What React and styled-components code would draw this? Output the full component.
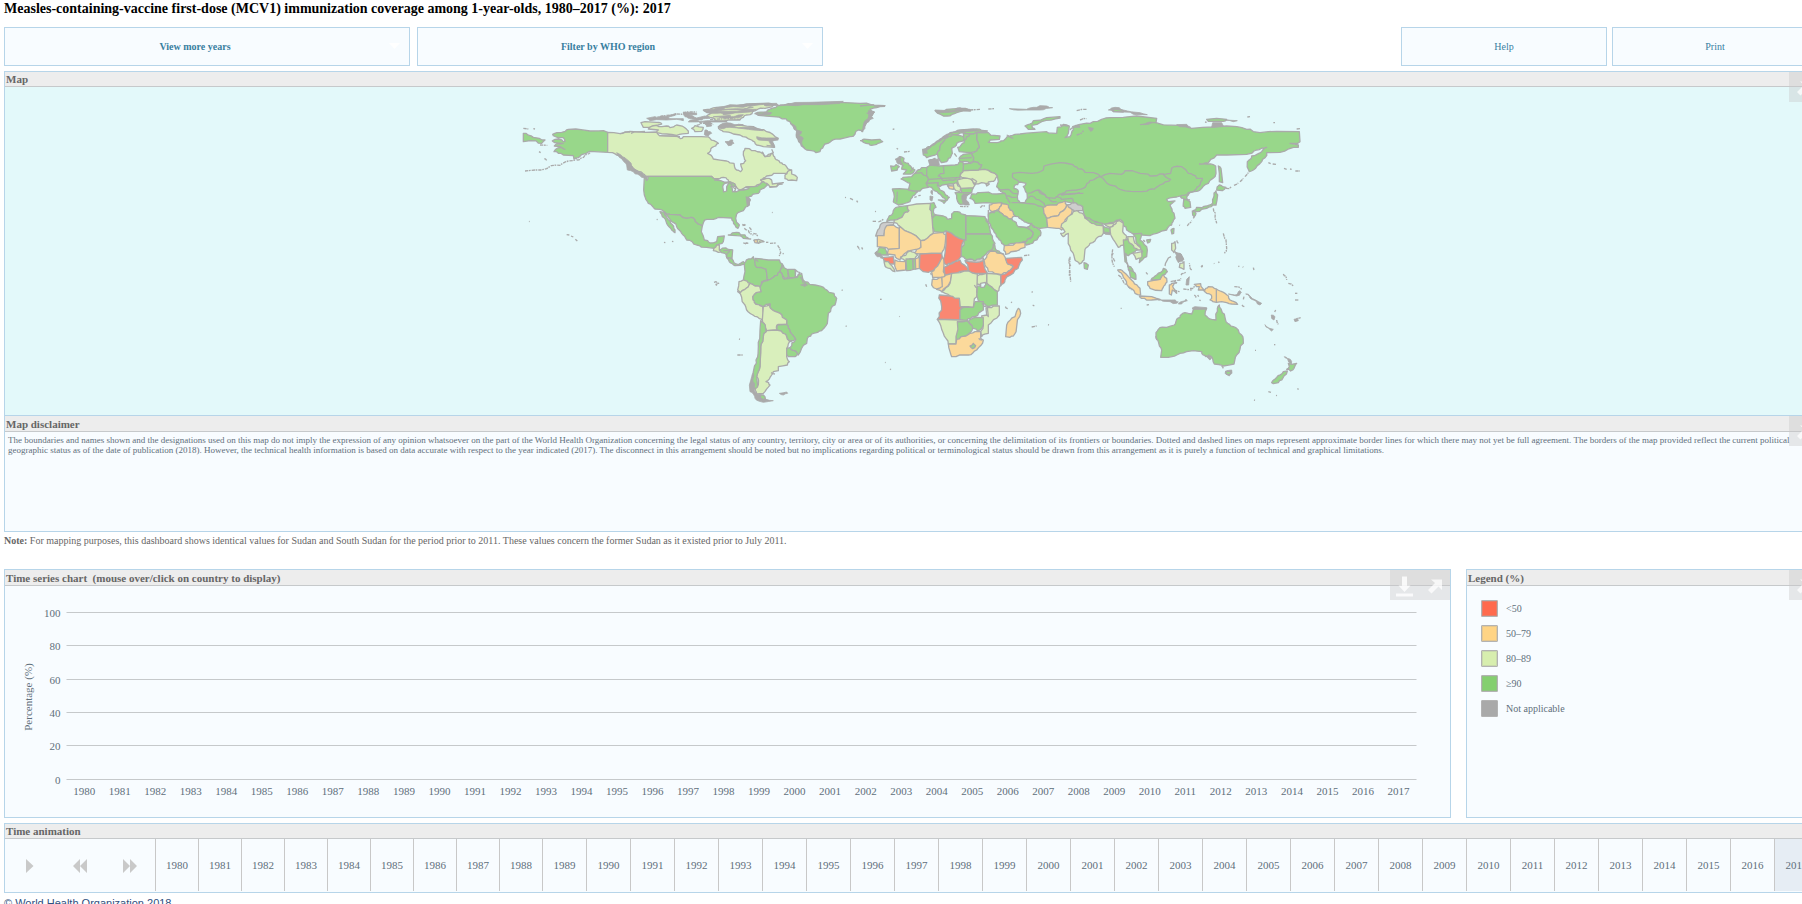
import React from "react";
import styled, { createGlobalStyle } from "styled-components";

const GlobalStyle = createGlobalStyle`
  html, body { margin: 0; padding: 0; background: #fff; }
  body { overflow: hidden; height: 904px; font-family: "Liberation Serif", "Times New Roman", serif; color: #5f6f7b; }
  * { box-sizing: border-box; }
`;

const Page = styled.main`
  width: 1818px;
  height: 904px;
  padding-left: 4px;
  overflow: hidden;
  display: flex;
  flex-direction: column;
  > * { flex-shrink: 0; }
`;

const Title = styled.h1`
  margin: 0;
  height: 27px;
  font-size: 14px;
  line-height: 17px;
  font-weight: bold;
  color: #000;
  white-space: nowrap;
`;

const Toolbar = styled.div`
  display: flex;
  height: 39px;
  margin-bottom: 5px;
`;

const Button = styled.button`
  position: relative;
  width: ${(p) => p.$width}px;
  height: 39px;
  margin: 0 ${(p) => p.$gap || 0}px 0 0;
  padding: 0 ${(p) => (p.$bold ? 24 : 0)}px 0 0;
  border: 1px solid #b7d5e9;
  background: #f8fcff;
  color: #38809f;
  font: ${(p) => (p.$bold ? "bold" : "normal")} 10px/37px "Liberation Serif", serif;
`;

const Caret = styled.svg`
  position: absolute;
  right: 9px;
  top: 15px;
`;

const Spacer = styled.div`
  flex: 1;
`;

const Panel = styled.section`
  position: relative;
  display: flex;
  flex-direction: column;
  width: ${(p) => (p.$width ? p.$width + "px" : "auto")};
  height: ${(p) => p.$height}px;
  border: 1px solid #b7d5e9;
  border-bottom-width: ${(p) => (p.$open ? 0 : 1)}px;
  background: #f8fcff;
`;

const PanelTitle = styled.h2`
  flex: none;
  margin: 0;
  height: ${(p) => p.$height || 16}px;
  padding: ${(p) => (p.$height === 15 ? 0 : 1)}px 0 0 1px;
  border-bottom: 1px solid #c6c9cb;
  background: #ededed;
  color: #666;
  font-size: 11px;
  line-height: 14px;
  font-weight: bold;
  white-space: pre;
`;

const Tools = styled.div`
  position: absolute;
  top: 0;
  right: 0;
  width: ${(p) => p.$width}px;
  height: 30px;
  display: flex;
  overflow: hidden;
  background: rgba(200, 200, 200, 0.4);
  > svg { flex: none; }
`;

const Disclaimer = styled.p`
  margin: 3px 0 0;
  padding: 0 25px 0 3px;
  font-size: 9px;
  line-height: 10px;
`;

const Note = styled.p`
  margin: 0;
  height: 37px;
  padding-top: 2px;
  font-size: 10px;
  line-height: 14px;
  color: #666;
`;

const Columns = styled.div`
  display: flex;
  gap: 15px;
  margin-bottom: 5px;
`;

const LegendList = styled.ul`
  list-style: none;
  margin: 0;
  padding: 14px 0 0 14px;
  display: flex;
  flex-direction: column;
  gap: 8px;
`;

const LegendItem = styled.li`
  display: flex;
  align-items: center;
  gap: 8px;
  height: 17px;
  font-size: 10px;
`;

const Swatch = styled.span`
  width: 17px;
  height: 17px;
  border: 1px solid #b3b3b3;
  border-radius: 1px;
  background: ${(p) => p.$color};
  box-shadow: inset 0 0 0 1px rgba(170, 170, 170, 0.3);
`;

const Timeline = styled.div`
  display: flex;
  height: 52px;
`;

const Controls = styled.div`
  width: 150px;
  flex: none;
  padding: 20px 0 0 21px;
  display: flex;
  gap: 35px;
`;

const Year = styled.div`
  flex: none;
  width: ${(p) => p.$width}px;
  border-left: 1px solid #c8c8c8;
  background: ${(p) => (p.$active ? "#e6edf4" : "transparent")};
  font-size: 11px;
  line-height: 53px;
  text-align: center;
`;

const Footer = styled.footer`
  padding-top: 4px;
  font: 11px/13px "Liberation Sans", Arial, sans-serif;
  color: #2f4f80;
`;

const MapSvg = styled.svg`
  display: block;
  flex: none;
  background: #e3f9fa;
`;

const ChartSvg = styled.svg`
  display: block;
  flex: none;
  font-family: "Liberation Serif", serif;
  font-size: 11px;
  fill: #5f6f7b;
`;

const years = Array.from({ length: 38 }, (_, i) => 1980 + i);

const palette = {
  R: "#f98772",
  O: "#fbd99b",
  L: "#d9efbc",
  G: "#98d78a",
  N: "#cdcdcd",
  K: "#aaaaaa",
  W: "#e3f9fa",
};

// Splits an edge with small offsets; the offsets depend only on the end points,
// so two countries that share an edge keep the same border.
function rough(a, b, depth) {
  const dx = b[0] - a[0];
  const dy = b[1] - a[1];
  const len = Math.hypot(dx, dy);
  if (depth === 0 || len < 8 || Math.abs(dy) < 4 || Math.abs(dx) < 4) return [b];
  const flip = a[0] < b[0] || (a[0] === b[0] && a[1] < b[1]) ? 1 : -1;
  const h = Math.sin((a[0] + b[0]) * 12.9898 + (a[1] + b[1]) * 78.233) * 43758.5453;
  const k = (h - Math.floor(h) - 0.5) * 0.42 * flip * Math.min(1, 18 / len);
  const m = [(a[0] + b[0]) / 2 - dy * k, (a[1] + b[1]) / 2 + dx * k];
  return [...rough(a, m, depth - 1), ...rough(m, b, depth - 1)];
}

function outline(points, closed) {
  const p = points.split(" ").map((s) => s.split(",").map(Number));
  const list = closed ? [...p, p[0]] : p;
  let out = [list[0]];
  for (let i = 1; i < list.length; i++) out = out.concat(rough(list[i - 1], list[i], 2));
  return "M" + out.map((q) => q[0].toFixed(1) + " " + q[1].toFixed(1)).join("L") + (closed ? "Z" : "");
}

const regions = [
  {
    name: "north-america",
    x: 510,
    y: 90,
    shapes: [
      ["G", "127,153 145,147 165,155 160,143 130,137 128,133 155,127 175,118 197,117 240,123 293,127 293,187 240,184 228,190 205,203 192,207 190,197 160,195 132,185 150,172 165,178 150,170 133,168 160,160"],
      ["L", "293,127 330,131 360,124 405,127 440,126 448,137 500,138 512,146 530,140 575,140 600,145 612,152 625,160 607,172 593,190 610,207 650,213 672,220 680,240 692,245 697,238 692,222 707,212 700,195 705,175 718,176 735,182 750,186 765,200 788,190 795,205 810,218 828,228 843,240 830,250 800,250 770,258 752,270 765,266 783,268 787,282 780,285 765,275 750,282 733,290 700,297 690,300 678,290 665,278 658,275 625,266 597,259 414,259 400,252 370,236 355,220 335,205 320,195 293,187"],
      ["G", "414,259 597,259 625,266 658,275 665,278 678,290 668,305 690,300 700,297 733,290 765,272 772,285 750,300 745,310 725,318 713,325 718,345 700,362 680,372 677,385 688,405 684,415 675,405 665,384 640,383 610,388 590,388 577,408 560,398 545,382 530,385 510,375 480,373 463,365 435,357 415,340 403,315 401,300 403,262 410,272"],
      ["G", "463,365 480,373 510,375 530,385 545,382 560,398 577,408 574,425 583,450 600,459 620,455 623,440 643,438 640,455 630,462 620,465 612,475 590,472 560,465 530,450 515,430 500,410 480,388 472,377"],
      ["G", "450,365 463,367 468,378 482,400 495,420 495,428 485,420 470,400 457,380"],
      ["L", "620,465 628,465 628,478 635,482 625,487 610,482 612,475"],
      ["L", "393,98 405,95 440,97 455,102 430,107 415,112 400,112"],
      ["L", "415,117 440,106 455,110 470,108 480,113 500,105 530,118 535,130 500,136 470,132 440,128 445,120"],
      ["L", "545,115 555,107 580,112 575,124 555,125"],
      ["L", "625,110 650,100 690,105 730,110 770,125 805,145 780,150 793,172 760,170 740,165 725,150 690,135 670,132 640,125"],
      ["L", "580,60 620,52 660,46 710,42 760,40 790,45 765,55 740,60 720,74 700,82 690,90 625,94 610,84 590,78 605,68"],
      ["L", "825,255 845,240 845,252 862,262 860,272 845,270 825,266"],
      ["L", "752,270 770,265 785,270 787,282 800,280 820,278 800,290 780,292 770,280"],
      ["G", "735,71 770,66 785,55 810,47 860,43 960,38 990,37 1050,40 1125,47 1100,53 1080,58 1090,70 1075,90 1060,110 1058,125 1045,120 1020,140 990,147 965,152 945,162 930,185 918,188 890,180 872,160 860,135 862,122 840,95 825,86 790,80 745,76"],
      ["G", "40,130 70,142 105,150 95,160 60,152 40,155"],
      ["G", "655,435 680,427 705,435 722,447 700,445 680,437"],
      ["L", "732,452 745,448 762,455 745,460"],
      ["O", "732,450 742,449 742,459 735,458"],
      ["K", "700,459 712,459 707,462"],
      ["W", "614,270 640,262 655,270 655,276 632,272"],
      ["W", "638,290 645,280 657,278 650,290 650,303 641,306"],
      ["W", "660,280 678,290 676,300 668,305 666,292"],
      ["W", "690,300 704,293 718,292 700,300"],
      ["K", "320,188 345,203 365,228 398,250 412,262 410,270 395,262 370,245 352,240 350,225 335,205"],
      ["K", "410,85 435,80 440,84 498,70 495,76 470,80 480,86 520,86 520,92 500,88 470,90 440,89 420,92"],
      ["K", "520,66 560,70 560,74 535,74 560,84 585,78 600,85 575,90 545,86 525,80"],
      ["K", "535,96 560,90 570,100 580,95 590,110 605,108 600,96 650,96 650,92 590,92"],
      ["K", "580,62 640,50 720,42 800,40 810,46 770,48 750,44 700,52 670,50 640,58 680,56 720,50 730,52 690,60 620,64 660,64 700,58 740,58 720,66 690,68 660,72 640,74 620,70 600,70"],
      ["K", "640,78 660,76 670,80 700,74 690,82 670,84 640,84 610,80"],
      ["K", "585,120 605,130 595,138 583,134"],
      ["K", "625,110 650,98 700,104 670,108 700,112 730,112 760,122 730,120 700,116 660,112 640,116"],
      ["K", "740,140 770,144 800,144 805,150 785,158 795,172 770,166 786,168 775,152 745,150"],
      ["K", "645,155 668,150 672,160 655,167"],
      ["K", "840,98 858,110 858,120 875,125 866,135 880,145 875,160 885,175 870,160 858,135 860,122"],
      ["K", "810,45 900,37 1000,34 990,40 880,44 860,47"],
      ["K", "735,70 765,66 785,68 780,74 745,76"],
      ["K", "1075,62 1095,66 1085,80 1090,85 1070,98 1065,115 1055,125 1060,105 1068,90 1076,78"],
      ["K", "708,320 722,330 712,350 710,335"],
    ],
    lines: ["755,185 765,200 780,198 790,188 785,178", "660,290 678,297", "330,131 360,126", "363,130 405,124", "448,137 510,140", "780,290 818,282"],
    chains: ["45,243 75,240 110,236 140,225 175,213 200,204", "40,115 55,117", "90,165 112,166", "70,116 75,117", "200,210 225,195 240,188", "87,185 92,188", "103,206 110,211", "170,434 178,435", "183,438 190,441", "196,448 202,453", "697,403 703,406 708,404", "703,415 712,420", "718,412 723,425", "730,430 745,440", "715,421 730,436", "768,457 775,457", "780,460 798,459", "803,466 809,475 812,488 808,498", "818,490 821,492", "786,367 788,368", "462,457 466,458", "486,454 490,455", "440,388 443,389", "57,394 59,395", "500,72 560,66", "430,84 470,76 500,74", "600,88 660,86 690,88", "560,106 590,100 610,104"],
  },
  {
    name: "south-america",
    x: 690,
    y: 190,
    shapes: [
      ["G", "88,180 108,174 128,180 126,205 110,203 105,190 95,188"],
      ["G", "110,203 125,206 132,218 145,224 160,215 168,222 150,226 135,227 118,215"],
      ["G", "175,207 190,200 195,212 200,232 228,237 232,270 215,275 213,292 195,288 180,280 160,270 165,245 163,225"],
      ["G", "195,205 215,207 235,210 268,210 277,225 270,245 250,262 232,270 228,237 200,232"],
      ["G", "277,222 293,240 295,262 282,265 270,245"],
      ["G", "293,238 315,238 317,258 297,262"],
      ["G", "210,292 217,277 232,272 250,262 270,245 282,267 300,265 322,262 335,250 345,275 375,285 405,297 432,310 440,325 435,345 415,370 412,400 395,422 370,430 352,445 350,460 325,495 318,485 300,473 317,448 300,425 290,403 290,390 270,370 245,358 240,342 218,350 205,345 193,338 188,320 198,308 213,305"],
      ["W", "317,240 330,248 322,262 316,258"],
      ["L", "147,275 160,270 180,280 165,298 150,308 143,300"],
      ["L", "143,305 150,308 165,298 180,280 195,288 210,292 213,305 198,308 188,320 193,338 218,350 220,370 217,392 200,380 180,370 165,345 155,322"],
      ["L", "220,350 240,342 245,358 270,370 290,390 290,403 265,403 260,420 230,422 225,405 217,390"],
      ["G", "262,405 290,403 300,425 317,448 305,453 292,447 285,432 260,420"],
      ["G", "290,475 300,473 318,485 322,490 315,500 295,500 288,492"],
      ["L", "230,422 260,420 285,432 292,447 305,453 290,475 290,500 298,515 292,525 265,530 265,542 250,545 245,555 228,575 240,585 220,610 200,612 195,600 205,585 200,560 210,530 212,485 218,455 228,425"],
      ["G", "212,392 222,400 228,425 218,455 212,485 210,530 200,560 203,590 195,598 188,570 190,545 198,510 205,470 210,420"],
      ["K", "190,548 185,560 178,585 180,605 195,625 220,637 250,632 228,628 215,615 200,612 192,598 194,580 188,575 192,560"],
      ["G", "210,615 220,615 225,628 212,624"],
      ["K", "268,610 290,606 293,610 280,615"],
      ["K", "332,285 345,276 353,285 345,290"],
    ],
    lines: ["198,205 205,215", "100,182 120,182 108,200", "330,262 340,280", "243,548 255,552"],
    chains: ["72,277 78,275 86,280 78,283 80,287", "142,495 158,495", "147,447 150,448", "207,155 212,156", "168,159 175,160", "158,107 166,103", "455,300 458,301", "467,408 470,409", "502,168 509,180", "480,25 490,31", "465,22 468,23", "500,32 503,37"],
  },
  {
    name: "eurasia",
    x: 860,
    y: 90,
    shapes: [
      ["G", "350,128 385,128 420,138 418,148 390,150 385,157 412,158 435,148 450,138 480,132 520,128 560,125 590,130 592,112 610,103 628,108 625,130 615,143 630,140 640,120 638,110 660,103 700,95 750,83 790,82 830,78 890,85 888,98 980,107 995,115 1060,111 1100,108 1160,118 1200,128 1250,124 1318,125 1320,155 1290,160 1315,165 1315,172 1260,187 1220,188 1205,215 1180,240 1168,245 1162,215 1175,198 1205,185 1220,172 1190,180 1160,193 1100,195 1070,195 1035,222 1067,228 1068,250 1045,280 1020,300 1000,305 985,315 980,322 990,335 992,352 975,355 970,340 972,325 960,318 940,322 920,328 925,335 945,333 930,345 942,370 945,385 935,405 920,420 890,430 870,437 845,435 825,432 800,420 790,405 775,390 750,398 735,403 700,395 675,378 665,350 640,340 615,335 590,345 550,352 552,370 560,385 563,412 540,415 515,405 505,400 490,392 475,380 460,375 450,360 440,343 400,340 380,338 345,340 330,325 335,312 360,308 410,312 435,310 420,300 410,290 415,275 412,258 375,238 355,240 365,225 340,215 335,190 358,172 350,150"],
      ["W", "463,288 480,276 498,280 490,290 497,305 502,325 495,338 480,338 472,320 475,305 462,295"],
      ["G", "5,152 20,148 35,150 60,148 68,155 50,163 35,166 18,160"],
      ["G", "120,200 132,205 130,215 145,220 155,235 165,240 160,248 130,252 140,240 125,237 130,226 118,216"],
      ["G", "92,228 108,224 118,230 112,240 95,243"],
      ["K", "105,208 118,198 122,212 127,222 115,222"],
      ["G", "188,178 205,170 225,160 245,145 270,128 300,120 350,117 382,123 375,128 350,128 330,132 310,128 290,135 265,140 250,155 240,170 232,190 215,198 200,203 190,195"],
      ["G", "250,155 265,140 290,135 310,140 313,152 290,160 275,175 277,190 265,205 260,215 245,218 235,205 232,190 240,170"],
      ["G", "310,130 330,132 350,128 350,150 358,172 350,183 320,187 298,185 293,172 313,158"],
      ["G", "210,210 225,205 230,215 222,225 210,222"],
      ["G", "310,193 335,190 340,215 330,220 300,215 297,205"],
      ["G", "97,297 118,296 150,298 173,305 158,318 150,335 130,342 115,345 100,335 103,320"],
      ["G", "145,300 150,280 123,267 130,262 155,260 165,250 185,245 200,258 207,268 198,280 205,292 188,295 180,303 160,303"],
      ["G", "165,250 185,233 200,232 210,225 240,228 285,225 300,215 312,222 310,240 300,262 290,268 250,272 220,272 205,268 200,258 185,248"],
      ["G", "207,268 250,265 300,262 295,280 280,282 270,282 240,289 232,280 200,280"],
      ["G", "200,280 235,278 232,287 240,300 255,312 268,322 262,330 257,334 255,325 245,318 225,303 215,292 203,290"],
      ["G", "235,330 257,331 252,340"],
      ["K", "210,318 219,320 216,333 210,330"],
      ["K", "213,302 218,302 217,314"],
      ["O", "262,287 282,288 280,298 268,296"],
      ["L", "280,282 290,278 302,293 300,306 288,302 282,295"],
      ["G", "285,308 303,308 333,308 322,315 306,318 315,330 312,342 300,343 290,325"],
      ["G", "303,295 340,293 335,308 305,308"],
      ["L", "292,270 310,265 330,265 345,285 340,293 303,295 295,282"],
      ["L", "310,242 350,240 375,238 412,258 405,270 385,276 382,285 365,278 345,282 335,268 305,262 300,258"],
      ["G", "310,222 340,215 365,225 355,240 310,242"],
      ["O", "550,352 570,345 590,345 615,333 620,345 605,365 590,378 560,385 552,370"],
      ["O", "560,385 590,378 605,365 620,345 638,352 635,370 615,390 612,412 605,420 590,415 563,412"],
      ["N", "622,345 640,338 668,350 668,362 645,368 632,355"],
      ["O", "388,345 400,340 425,338 418,355 398,365 388,358"],
      ["O", "425,338 445,345 450,360 465,378 455,387 440,380 415,362 418,355"],
      ["G", "385,372 398,365 415,362 440,380 455,387 465,395 475,410 512,420 520,430 515,442 500,455 465,460 435,468 425,460 415,445 400,420 385,385"],
      ["G", "475,410 500,412 515,400 522,412 543,428 535,442 510,462 498,465 495,457 515,442 520,430 512,420"],
      ["G", "495,108 520,92 560,83 600,80 600,84 545,95 515,106 525,118 505,118"],
      ["G", "225,62 260,58 300,55 330,62 290,68 262,78"],
      ["K", "225,60 270,62 290,54 330,58 332,64 310,62 280,66 250,68 232,68"],
      ["K", "448,56 500,58 520,52 560,48 578,53 540,60 500,60"],
      ["K", "190,178 245,145 280,126 340,117 382,124 340,123 300,126 265,136 240,154 210,174 200,180 202,190 190,190"],
      ["K", "205,210 235,207 238,225 210,225"],
      ["K", "745,60 765,52 790,60 840,68 862,74 830,74 790,66 760,66"],
      ["G", "760,57 785,60 790,66 762,64"],
      ["K", "888,98 840,104 870,96"],
      ["K", "950,104 980,103 992,112 960,110"],
      ["G", "1040,88 1070,85 1100,88 1090,94 1045,94"],
      ["K", "1058,98 1085,98 1090,108 1055,112"],
      ["K", "1095,90 1132,92 1120,95"],
      ["K", "310,312 325,312 318,330 328,345 315,345 305,325"],
      ["K", "640,112 655,105 660,112"],
      ["K", "685,112 700,115 692,124"],
      ["L", "378,280 388,282 380,288"],
    ],
    lines: [
      "457,262 458,250 480,247 515,250 550,240 552,228 600,218 630,222 645,230 665,237 675,247 700,248 720,260",
      "457,262 470,270 478,276",
      "720,260 750,250 785,253 795,242 840,250 870,258 910,252 932,268 920,275 900,285 875,297 845,305 780,298 750,285 720,260",
      "910,254 932,250 935,235 965,230 985,250 1010,265 1027,265 1020,285 1005,300 985,308 960,320",
      "720,260 690,272 675,292 650,300 625,302 605,315 640,310 670,310",
      "505,310 520,305 535,300 560,322 585,325 600,312 660,308",
      "505,325 515,318 545,335 555,348",
      "535,300 550,310 570,330 590,335",
      "590,320 605,328 635,325 640,340",
      "415,300 445,298 460,310 475,312",
      "435,310 440,325 450,340",
      "440,318 455,322 470,322",
      "455,338 480,338 500,340 520,342 550,352",
      "112,305 110,337",
      "250,228 252,250 235,258 250,272 290,265",
      "200,232 200,258",
      "300,205 335,203",
      "312,152 330,132",
      "345,285 350,275 335,265",
      "160,232 150,245",
      "0,48 40,44 75,49", "0,152 10,152", "20,70 42,65", "970,328 990,330", "1017,222 1040,218", "600,105 625,108", "440,135 460,145",
      "385,360 385,380", "283,190 290,200", "388,367 405,368",
    ],
    chains: ["132,186 150,184", "110,175 114,178", "98,118 103,117", "45,364 48,365", "38,394 50,394", "55,396 70,388", "163,322 170,320", "175,317 182,316", "300,349 325,350", "360,352 375,348", "278,95 282,96", "330,60 360,58", "385,57 402,56", "650,62 680,58", "660,90 680,86", "1240,98 1245,98", "1310,117 1320,116", "1162,81 1170,80", "1035,96 1040,97"],
  },
  {
    name: "africa",
    x: 860,
    y: 190,
    shapes: [
      ["G", "118,50 143,47 147,62 130,75 103,90 80,97 95,75 100,62"],
      ["N", "80,97 102,97 100,105 80,107 78,125 72,137 47,138 58,115 70,98"],
      ["L", "143,47 170,42 212,40 210,58 217,85 218,110 220,130 182,152 118,108 102,97 103,90 130,75 147,62"],
      ["G", "212,40 222,38 228,52 220,65 228,75 217,85 210,58"],
      ["G", "217,85 228,75 250,78 262,88 275,85 275,72 292,65 317,75 317,150 312,150 258,123 250,128 222,125 218,110"],
      ["G", "318,77 345,78 375,80 383,98 378,90 392,132 318,132"],
      ["G", "318,132 392,132 405,160 395,180 375,195 365,205 350,215 322,212 305,200 303,185 312,165 312,150 318,150"],
      ["O", "52,137 72,137 80,107 100,105 118,115 118,175 85,178 75,172 52,170"],
      ["O", "118,108 182,152 183,172 150,182 130,195 120,210 105,195 82,192 85,178 118,175"],
      ["O", "182,152 220,130 250,127 258,135 255,165 245,190 215,190 180,192 160,190 183,172"],
      ["R", "258,123 312,150 303,200 285,215 260,225 250,208 255,190 258,165"],
      ["R", "180,192 215,190 245,190 247,202 225,235 205,247 190,245 178,235"],
      ["O", "225,235 247,202 252,225 250,245 255,262 218,262 215,245"],
      ["R", "252,232 285,215 300,210 325,243 290,250 255,255"],
      ["R", "315,212 350,215 370,205 372,225 382,250 345,250 325,238"],
      ["O", "385,190 400,183 425,190 437,208 460,230 440,248 410,252 385,245 375,225 372,210"],
      ["G", "392,182 400,162 412,182 430,192 425,190 400,183"],
      ["R", "437,205 485,202 487,210 465,240 435,270 422,288 422,255 440,248 460,230 440,218"],
      ["L", "380,250 410,252 422,255 422,285 412,305 380,280"],
      ["L", "352,258 380,250 380,280 365,285 350,282"],
      ["G", "350,290 380,280 412,305 412,345 385,350 360,335 350,315"],
      ["L", "275,250 325,243 352,252 350,320 340,352 325,350 300,350 298,325 275,325 270,318 245,305 270,280"],
      ["O", "245,262 258,255 275,250 268,280 245,305 230,298 245,285"],
      ["O", "217,268 245,262 247,290 230,297 215,285"],
      ["R", "238,315 270,318 298,325 300,350 310,352 300,360 300,390 270,388 232,388 245,350"],
      ["G", "300,360 315,352 340,352 345,335 370,335 370,360 345,380 320,392 300,388"],
      ["L", "385,352 418,348 418,375 385,405 385,430 365,440 362,425 370,405 365,378 380,375 378,355"],
      ["G", "325,395 345,382 370,383 370,405 355,422 338,415"],
      ["G", "292,395 322,392 338,415 318,438 290,452 287,440"],
      ["L", "232,388 300,390 322,391 292,395 288,440 288,462 265,462 250,430"],
      ["O", "265,462 288,462 290,448 318,438 345,425 362,425 362,445 370,450 350,480 325,495 275,500 270,485"],
      ["G", "330,468 340,460 347,467 338,476"],
      ["O", "437,440 440,405 465,380 475,355 482,370 470,410 460,438 450,442"],
      ["G", "45,190 60,172 75,175 85,195 60,195"],
      ["K", "46,188 62,190 68,200 52,200"],
      ["R", "62,203 100,200 103,222 90,222 75,213"],
      ["L", "72,215 85,215 105,245 95,240 75,228"],
      ["O", "105,210 137,215 137,240 110,243"],
      ["L", "122,205 150,183 173,195 165,207 135,212"],
      ["G", "138,207 158,207 160,238 140,242"],
      ["G", "159,207 166,205 167,237 160,238"],
      ["O", "166,207 178,195 178,235 167,237"],
      ["W", "362,280 376,277 372,292 362,292"],
      ["O", "433,167 460,165 495,157 495,172 470,183 437,193"],
      ["N", "318,210 330,207 345,212 360,207 368,200 370,212 350,217 325,215"],
    ],
    lines: ["343,285 352,295 350,308", "365,340 382,352 385,380 378,375", "356,445 366,450", "217,265 224,263"],
    chains: ["212,248 214,255", "436,350 444,356", "453,336 456,338", "492,197 508,195", "515,305 518,307", "515,411 530,408", "564,404 567,405", "118,379 119,380", "60,328 65,328", "75,517 77,518", "90,537 93,539", "628,205 632,228", "629,240 632,275", "197,283 200,290", "5,172 8,178", "518,345 523,348"],
  },
  {
    name: "asia",
    x: 1060,
    y: 90,
    shapes: [
      ["L", "5,402 20,390 40,365 50,362 68,370 75,385 100,400 130,408 130,430 115,440 90,460 75,478 72,510 58,522 45,510 30,470 25,430 10,440 2,430 15,425 3,412"],
      ["G", "75,382 100,392 128,400 125,407 95,400"],
      ["G", "130,408 150,415 150,430 132,430"],
      ["K", "132,426 152,428 150,434 136,433"],
      ["L", "135,402 160,400 180,388 190,398 160,405 150,412"],
      ["L", "150,412 165,403 178,392 190,400 188,425 200,440 190,465 175,472 155,440"],
      ["G", "72,518 85,525 82,538 73,535"],
      ["G", "190,450 205,445 215,462 235,465 233,480 215,490 205,497 197,490 200,515 205,530 195,515 192,480"],
      ["L", "203,440 220,440 230,462 245,480 235,480 215,462 205,452"],
      ["G", "220,432 245,430 240,450 262,480 260,500 238,518 240,503 248,485 228,455"],
      ["L", "218,490 245,485 246,500 228,508"],
      ["G", "203,528 218,538 226,568 212,560"],
      ["G", "260,450 272,448 270,455 263,459"],
      ["G", "333,420 342,415 341,430 336,432"],
      ["G", "400,362 410,352 440,348 458,340 462,318 468,303 473,315 468,345 440,355 410,365"],
      ["G", "470,300 478,285 498,292 487,302"],
      ["G", "475,228 483,235 486,260 488,278 478,275 478,250"],
      ["G", "397,363 408,370 403,380 398,375"],
      ["L", "335,460 345,455 347,475 342,488 335,480"],
      ["L", "360,520 372,515 372,538 358,532"],
      ["K", "345,485 360,490 370,505 368,514 355,518 347,500 355,498"],
    ],
    lines: ["315,528 333,500"],
    chains: ["498,295 515,290", "522,286 535,279", "540,275 550,265", "555,260 565,248", "625,218 632,221", "638,222 648,223", "672,235 680,238", "690,237 695,238", "706,243 720,243", "382,408 395,392", "400,385 403,380", "358,405 360,406", "158,478 155,500", "160,505 165,515", "490,430 498,450 500,475 494,490", "395,540 388,520", "424,532 428,528", "462,520 463,521", "30,500 28,560", "460,355 465,385 470,400", "30,120 48,106", "50,135 70,122", "250,450 255,455", "355,460 350,450", "548,530 550,532"],
  },
  {
    name: "oceania",
    x: 1080,
    y: 240,
    shapes: [
      ["O", "113,90 130,95 160,125 180,145 182,165 165,160 145,140 130,112"],
      ["G", "145,88 160,95 168,118 152,112"],
      ["O", "178,168 215,170 240,178 215,180 185,175"],
      ["O", "203,125 240,118 250,103 260,115 255,135 245,152 210,145 203,135"],
      ["G", "213,120 230,105 250,85 262,95 248,105 240,118"],
      ["O", "268,135 275,130 290,128 278,138 290,160 277,150 274,165 268,162"],
      ["O", "370,150 385,140 409,147 435,160 450,180 473,193 455,192 425,185 409,187 390,180 395,168 380,160"],
      ["O", "343,133 362,131 368,145 375,150 355,150 358,140"],
      ["G", "228,290 235,268 260,262 283,255 290,238 300,232 315,218 335,222 340,207 380,205 375,225 395,238 408,240 412,205 418,195 427,218 433,222 438,245 460,260 485,285 490,310 470,345 462,372 430,378 403,372 392,348 385,352 387,345 378,350 365,335 340,332 300,340 265,352 242,352 245,330 235,305"],
      ["K", "378,346 396,352 390,360 384,354"],
      ["K", "440,392 455,390 456,400 448,408 435,400"],
      ["G", "437,394 453,394 450,403 440,403"],
      ["G", "625,370 635,373 650,370 642,385 632,393 620,388 628,380"],
      ["K", "613,350 622,355 635,365 634,372 626,366"],
      ["G", "575,428 590,412 610,395 622,393 612,408 595,428 580,431"],
      ["K", "497,162 510,168 545,190 540,195 515,178"],
      ["K", "445,162 465,165 480,152 484,158 470,168"],
      ["K", "574,225 585,230 582,240 575,235"],
      ["K", "555,254 580,268 575,273"],
      ["K", "642,238 652,234 655,242 645,245"],
      ["K", "320,118 328,110 326,135 318,135"],
      ["K", "235,180 275,180 295,186 290,190 250,184"],
      ["K", "295,192 318,178 322,182 305,192"],
      ["K", "285,36 305,45 312,58 300,65 290,55"],
      ["K", "336,205 345,200 380,203 378,208 345,208"],
    ],
    lines: ["409,146 409,186", "290,130 282,122", "228,288 232,298"],
    chains: ["115,105 140,135", "145,140 155,150", "272,125 300,120 303,115", "282,152 300,155", "310,147 335,150", "343,165 348,175", "353,165 356,170", "358,180 362,182", "463,140 485,148", "486,195 493,200", "590,240 595,253", "610,102 620,120", "625,130 640,140", "645,160 652,160", "645,180 657,180", "525,331 528,331", "425,378 430,385", "565,455 573,457", "588,466 591,467", "522,480 525,481", "652,446 656,448", "122,205 125,205", "200,195 207,194", "363,80 368,76", "415,65 418,68", "475,78 478,80", "520,83 522,90", "303,105 318,95", "490,178 492,170", "655,235 662,233", "584,216 587,210", "330,145 345,140", "100,40 96,60 103,80", "582,314 586,314", "198,97 203,103"],
  },
];

function WorldMap() {
  return (
    <MapSvg width="1812" height="328" viewBox="5 87 1812 328">
      {regions.map((r) => (
        <g
          key={r.name}
          transform={`translate(${r.x} ${r.y}) scale(0.33333)`}
          stroke="#aaaaaa"
          strokeWidth="3.9"
          strokeLinejoin="round"
        >
          {r.shapes.map(([kind, pts], i) => (
            <path key={i} d={outline(pts, true)} fill={palette[kind]} strokeWidth={kind === "K" ? 2.4 : 3.9} />
          ))}
          {r.lines.map((pts, i) => (
            <path key={"l" + i} d={outline(pts, false)} fill="none" />
          ))}
          {r.chains.map((pts, i) => (
            <path key={"c" + i} d={outline(pts, false)} fill="none" strokeWidth="4" strokeDasharray="10 2 5 3" />
          ))}
        </g>
      ))}
    </MapSvg>
  );
}

function SeriesChart() {
  const rows = [[100, 612], [80, 645], [60, 679], [40, 712], [20, 745], [0, 779]];
  return (
    <ChartSvg width="1445" height="231" viewBox="5 586 1445 231">
      {rows.map(([v, y]) => (
        <g key={v}>
          <rect x="66.5" y={y} width="1350" height="1" fill="#c6c9cb" />
          <text x="60.5" y={y + 5} textAnchor="end">{v}</text>
        </g>
      ))}
      {years.map((y, i) => (
        <text key={y} x={84.2 + i * 35.52} y="795" textAnchor="middle">{y}</text>
      ))}
      <text transform="translate(32 697) rotate(-90)" textAnchor="middle">Percentage (%)</text>
    </ChartSvg>
  );
}

function ExpandIcon() {
  return (
    <svg width="30" height="30" viewBox="0 0 30 30" fill="rgba(255,255,255,0.75)">
      <path d="M11 9.500H22V20L18.500 16.500L11.500 23.500L8 20L15 13Z" />
    </svg>
  );
}

function DownloadIcon() {
  return (
    <svg width="30" height="30" viewBox="0 0 30 30" fill="rgba(255,255,255,0.8)">
      <path d="M12 6.500H17V15.500H20.500L14.500 22L8.500 15.500H12ZM6 23.500H23V26.500H6Z" />
    </svg>
  );
}

function DropCaret() {
  return (
    <Caret width="11" height="7" viewBox="0 0 11 7">
      <path d="M0 0H11L5.500 6Z" fill="#fff" />
    </Caret>
  );
}

const legend = [
  ["#ff6a4d", "<50"],
  ["#ffd485", "50–79"],
  ["#d7eeae", "80–89"],
  ["#84cf6f", "≥90"],
  ["#a9a9a9", "Not applicable"],
];

export default function App() {
  return (
    <Page>
      <GlobalStyle />
      <Title>Measles-containing-vaccine first-dose (MCV1) immunization coverage among 1-year-olds, 1980–2017 (%): 2017</Title>
      <Toolbar>
        <Button $width={406} $gap={7} $bold>View more years<DropCaret /></Button>
        <Button $width={406} $bold>Filter by WHO region<DropCaret /></Button>
        <Spacer />
        <Button $width={206} $gap={5}>Help</Button>
        <Button $width={206}>Print</Button>
      </Toolbar>
      <Panel $height={344} $open>
        <PanelTitle $height={15}>Map</PanelTitle>
        <WorldMap />
        <Tools $width={28}><ExpandIcon /></Tools>
      </Panel>
      <Panel $height={117}>
        <PanelTitle>Map disclaimer</PanelTitle>
        <Disclaimer>
          The boundaries and names shown and the designations used on this map do not imply the expression of any opinion whatsoever on the part of the World Health Organization concerning the legal status of any country, territory, city or area or of its authorities, or concerning the delimitation of its frontiers or boundaries. Dotted and dashed lines on maps represent approximate border lines for which there may not yet be full agreement. The borders of the map provided reflect the current political geographic status as of the date of publication (2018). However, the technical health information is based on data accurate with respect to the year indicated (2017). The disconnect in this arrangement should be noted but no implications regarding political or terminological status should be drawn from this arrangement as it is purely a function of technical and graphical limitations.
        </Disclaimer>
        <Tools $width={28}><ExpandIcon /></Tools>
      </Panel>
      <Note><b>Note:</b> For mapping purposes, this dashboard shows identical values for Sudan and South Sudan for the period prior to 2011. These values concern the former Sudan as it existed prior to July 2011.</Note>
      <Columns>
        <Panel $width={1447} $height={249}>
          <PanelTitle>{"Time series chart  (mouse over/click on country to display)"}</PanelTitle>
          <SeriesChart />
          <Tools $width={60}><DownloadIcon /><ExpandIcon /></Tools>
        </Panel>
        <Panel $width={352} $height={249}>
          <PanelTitle>Legend (%)</PanelTitle>
          <LegendList>
            {legend.map(([color, label]) => (
              <LegendItem key={label}><Swatch $color={color} />{label}</LegendItem>
            ))}
          </LegendList>
          <Tools $width={28}><ExpandIcon /></Tools>
        </Panel>
      </Columns>
      <Panel $height={70}>
        <PanelTitle $height={15}>Time animation</PanelTitle>
        <Timeline>
          <Controls>
            <svg width="12" height="14" viewBox="0 0 12 14" fill="#c9c9c9"><path d="M0 0L7.500 7L0 14Z" /></svg>
            <svg width="15" height="14" viewBox="0 0 15 14" fill="#c9c9c9"><path d="M7 0V14L0 7ZM14 0V14L7 7Z" /></svg>
            <svg width="15" height="14" viewBox="0 0 15 14" fill="#c9c9c9"><path d="M0 0L7 7L0 14ZM7 0L14 7L7 14Z" /></svg>
          </Controls>
          {years.map((y) => (
            <Year key={y} $width={y < 1989 ? 43 : 44} $active={y === 2017}>{y}</Year>
          ))}
        </Timeline>
      </Panel>
      <Footer>© World Health Organization 2018</Footer>
    </Page>
  );
}
